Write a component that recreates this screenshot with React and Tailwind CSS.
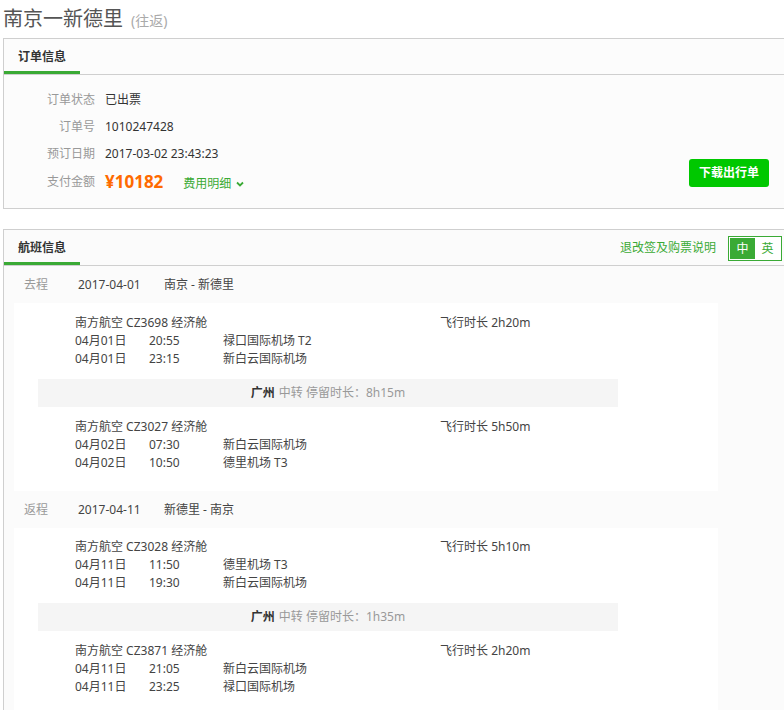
import React from "react";

const font = { fontFamily: '"Noto Sans", "Noto Sans CJK SC", sans-serif' };

function Flight({ title, d1, t1, a1, d2, t2, a2, dur }) {
  return (
    <div className="relative pl-[61px] text-[12px] leading-[18px] text-[#444]">
      <div>{title}</div>
      <div className="flex">
        <span className="w-[74px]">{d1}</span>
        <span className="w-[74px]">{t1}</span>
        <span>{a1}</span>
      </div>
      <div className="flex">
        <span className="w-[74px]">{d2}</span>
        <span className="w-[74px]">{t2}</span>
        <span>{a2}</span>
      </div>
      <div className="absolute left-[426px] top-0">飞行时长 {dur}</div>
    </div>
  );
}

function Transfer({ city, stay }) {
  return (
    <div className="ml-[24px] my-[11px] flex h-[28px] w-[580px] items-center justify-center bg-[#f5f5f5] text-[12px]">
      <span className="font-bold text-[#333]">{city}</span>
      <span className="ml-[4px] text-[#999]">中转 停留时长：{stay}</span>
    </div>
  );
}

function TripHeader({ label, date, route }) {
  return (
    <div className="flex h-[37px] items-center text-[12px] text-[#444]">
      <span className="ml-[20px] w-[54px] text-[#999]">{label}</span>
      <span className="w-[86px]">{date}</span>
      <span>{route}</span>
    </div>
  );
}

export default function App() {
  return (
    <div className="h-[710px] w-[784px] overflow-hidden bg-white" style={font}>
      <div className="flex h-[38px] items-end pb-[5px] pl-[3px]">
        <span className="text-[20px] leading-[28px] text-[#555]">南京一新德里</span>
        <span className="ml-[8px] mb-[2px] text-[14px] leading-[20px] text-[#aaa]">(往返)</span>
      </div>

      {/* Order info card */}
      <div className="ml-[3px] border-b border-l border-t border-[#cfcfcf] bg-[#fcfcfc]">
        <div className="relative h-[36px] border-b border-[#cfcfcf]">
          <div className="flex h-full w-[76px] items-center justify-center border-b-[3px] border-[#3aaa35] pt-[3px] text-[12px] font-bold text-[#333]">
            订单信息
          </div>
        </div>
        <div className="relative h-[133px] pt-[11px] text-[12px]">
          <div className="flex h-[27px] items-center">
            <span className="w-[91px] text-right text-[#999]">订单状态</span>
            <span className="ml-[10px] text-[#333]">已出票</span>
          </div>
          <div className="flex h-[27px] items-center">
            <span className="w-[91px] text-right text-[#999]">订单号</span>
            <span className="ml-[10px] text-[#333]">1010247428</span>
          </div>
          <div className="flex h-[27px] items-center">
            <span className="w-[91px] text-right text-[#999]">预订日期</span>
            <span className="ml-[10px] text-[#333]">2017-03-02 23:43:23</span>
          </div>
          <div className="flex h-[30px] items-center">
            <span className="w-[91px] text-right text-[#999]">支付金额</span>
            <span className="ml-[10px] text-[17px] font-bold text-[#ff6a00]">¥10182</span>
            <span className="ml-[20px] mt-[3px] flex items-center text-[#3aaa35]">
              费用明细
              <svg width="10" height="10" viewBox="0 0 10 10" className="ml-[4px]">
                <path d="M2 3.5 L5 6.5 L8 3.5" fill="none" stroke="#3aaa35" strokeWidth="1.8" />
              </svg>
            </span>
          </div>
          <button className="absolute left-[685px] top-[84px] flex h-[28px] w-[80px] items-center justify-center rounded-[3px] bg-[#00c800] text-[12px] font-bold text-white">
            下载出行单
          </button>
        </div>
      </div>

      {/* Flight info card */}
      <div className="ml-[3px] mt-[20px] border-l border-t border-[#cfcfcf] bg-[#fbfbfb]">
        <div className="relative flex h-[36px] items-center border-b border-[#cfcfcf]">
          <div className="flex h-full w-[76px] items-center justify-center border-b-[3px] border-[#3aaa35] pt-[3px] text-[12px] font-bold text-[#333]">
            航班信息
          </div>
          <span className="absolute left-[616px] top-[9px] text-[12px] text-[#3aaa35]">退改签及购票说明</span>
          <div className="absolute left-[724px] top-[6px] flex h-[25px] w-[54px] items-center border border-[#3aaa35] bg-white p-[1px] text-[12px]">
            <span className="flex h-full w-[25px] items-center justify-center bg-[#3aaa35] text-white">中</span>
            <span className="flex h-full flex-1 items-center justify-center text-[#3aaa35]">英</span>
          </div>
        </div>

        <TripHeader label="去程" date="2017-04-01" route="南京 - 新德里" />
        <div className="ml-[10px] w-[704px] bg-white pb-[19px] pt-[11px]">
          <Flight title="南方航空 CZ3698 经济舱" d1="04月01日" t1="20:55" a1="禄口国际机场 T2" d2="04月01日" t2="23:15" a2="新白云国际机场" dur="2h20m" />
          <Transfer city="广州" stay="8h15m" />
          <Flight title="南方航空 CZ3027 经济舱" d1="04月02日" t1="07:30" a1="新白云国际机场" d2="04月02日" t2="10:50" a2="德里机场 T3" dur="5h50m" />
        </div>

        <TripHeader label="返程" date="2017-04-11" route="新德里 - 南京" />
        <div className="ml-[10px] w-[704px] bg-white pb-[19px] pt-[10px]">
          <Flight title="南方航空 CZ3028 经济舱" d1="04月11日" t1="11:50" a1="德里机场 T3" d2="04月11日" t2="19:30" a2="新白云国际机场" dur="5h10m" />
          <Transfer city="广州" stay="1h35m" />
          <Flight title="南方航空 CZ3871 经济舱" d1="04月11日" t1="21:05" a1="新白云国际机场" d2="04月11日" t2="23:25" a2="禄口国际机场" dur="2h20m" />
        </div>
      </div>
    </div>
  );
}
